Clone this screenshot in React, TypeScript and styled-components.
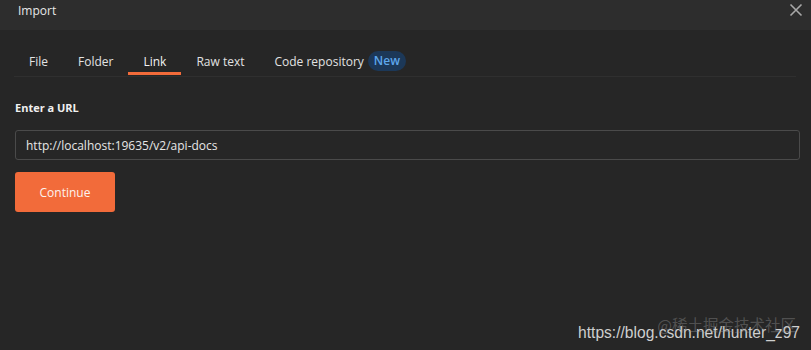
import styled, { createGlobalStyle } from 'styled-components';

const GlobalStyle = createGlobalStyle`
  html, body {
    margin: 0;
    padding: 0;
    background: #262626;
  }
  body {
    font-family: 'Open Sans', 'Liberation Sans', sans-serif;
  }
`;

const StyledModal = styled.section`
  width: 811px;
  height: 350px;
  background: #262626;
  display: flex;
  flex-direction: column;
  overflow: hidden;
`;

const Header = styled.header`
  height: 30px;
  flex-shrink: 0;
  background: #2d2d2d;
  display: flex;
  align-items: center;
  justify-content: space-between;
  padding: 0 8px 0 18px;
  box-sizing: border-box;

  .title {
    color: #e8e8e8;
    font-size: 12px;
    margin-top: -10px;
  }

  svg {
    margin-top: -10px;
  }
`;

const Tabs = styled.nav`
  margin: 16px 15px 0 14px;
  height: 30px;
  display: flex;
  align-items: stretch;
  border-bottom: 1px solid #2f2f2f;
`;

const Tab = styled.div<{ $active?: boolean }>`
  position: relative;
  display: flex;
  align-items: center;
  padding: 0 15px;
  color: ${(p) => (p.$active ? '#f2f2f2' : '#e2e2e2')};
  font-size: 12px;
  white-space: nowrap;

  &::after {
    content: '';
    display: ${(p) => (p.$active ? 'block' : 'none')};
    position: absolute;
    left: 0;
    right: 0;
    bottom: 1px;
    height: 3px;
    background: #f26b3a;
  }
`;

const Badge = styled.span`
  margin-left: 4px;
  padding: 1px 6px 2px;
  border-radius: 10px;
  background: #1c3858;
  color: #5ea7ec;
  font-size: 12px;
  font-weight: 600;
`;

const Body = styled.div`
  padding: 23px 15px 0;
  display: flex;
  flex-direction: column;
  align-items: flex-start;
`;

const Label = styled.label`
  color: #f0f0f0;
  font-size: 11px;
  font-weight: 700;
  line-height: 16px;
`;

const Input = styled.input`
  margin-top: 14px;
  width: 785px;
  height: 30px;
  box-sizing: border-box;
  background: #262626;
  border: 1px solid #4a4a4a;
  border-radius: 3px;
  padding: 0 10px;
  color: #e6e6e6;
  font-family: inherit;
  font-size: 12px;
  outline: none;
`;

const Button = styled.button`
  margin-top: 12px;
  width: 100px;
  height: 40px;
  border: none;
  border-radius: 3px;
  background: #f26b3a;
  color: #fdf3ee;
  font-family: inherit;
  font-size: 12px;
`;

const Footer = styled.div`
  margin-top: auto;
  padding: 0 11px 8px 0;
  display: flex;
  justify-content: flex-end;
`;

const Watermark = styled.div`
  position: relative;
  color: #cfcfcf;
  font-family: 'Liberation Sans', sans-serif;
  font-size: 15.6px;

  .stamp {
    position: absolute;
    right: 4px;
    top: -11px;
    color: rgba(150, 150, 150, 0.4);
    font-family: 'Noto Sans CJK SC', sans-serif;
    font-size: 15.5px;
  }
`;

const CloseIcon = () => (
  <svg width="14" height="14" viewBox="0 0 14 14">
    <path d="M1.5 1.5 L12.5 12.5 M12.5 1.5 L1.5 12.5" stroke="#a8a8a8" strokeWidth="1.6" />
  </svg>
);

const App = () => (
  <>
    <GlobalStyle />
    <StyledModal>
      <Header>
        <span className="title">Import</span>
        <CloseIcon />
      </Header>
      <Tabs>
        <Tab>File</Tab>
        <Tab>Folder</Tab>
        <Tab $active>Link</Tab>
        <Tab>Raw text</Tab>
        <Tab>
          Code repository
          <Badge>New</Badge>
        </Tab>
      </Tabs>
      <Body>
        <Label>Enter a URL</Label>
        <Input defaultValue="http://localhost:19635/v2/api-docs" />
        <Button>Continue</Button>
      </Body>
      <Footer>
        <Watermark>
          <span className="stamp">@稀土掘金技术社区</span>
          https://blog.csdn.net/hunter_z97
        </Watermark>
      </Footer>
    </StyledModal>
  </>
);

export default App;
